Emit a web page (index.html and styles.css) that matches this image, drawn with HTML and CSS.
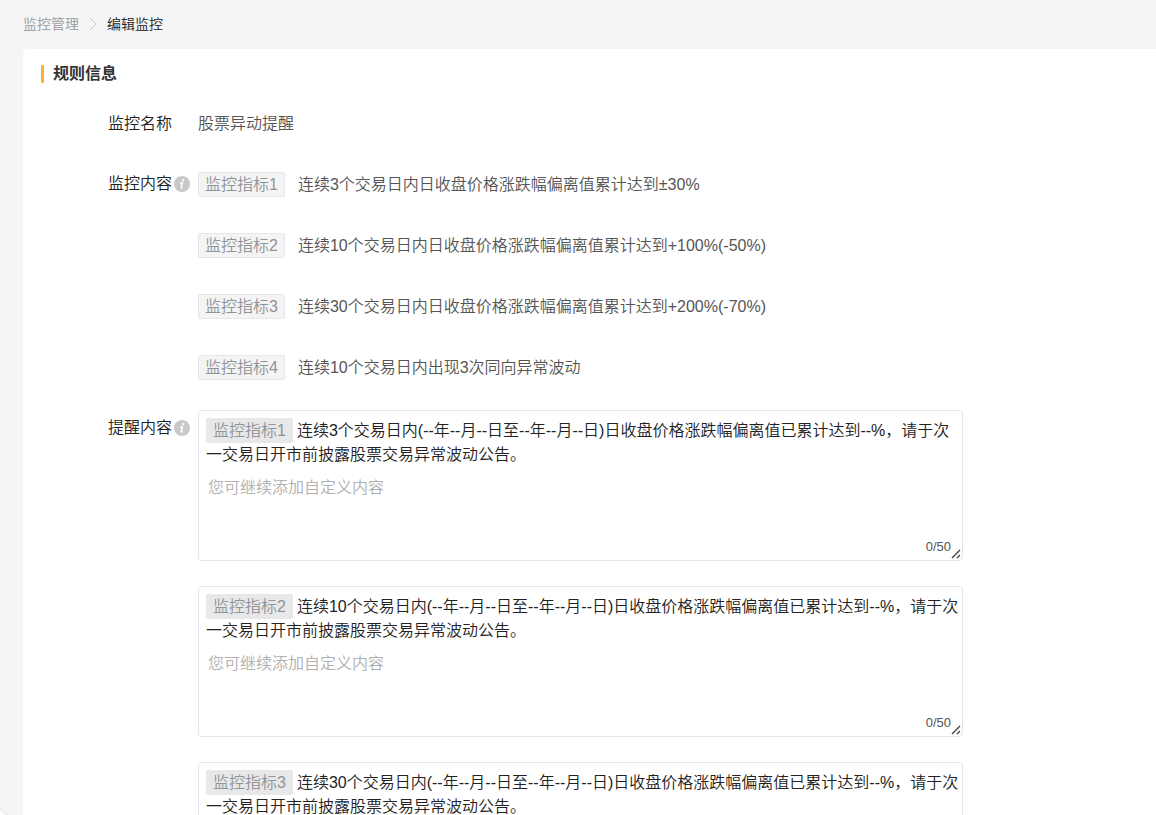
FILE: index.html
```html
<!DOCTYPE html>
<html lang="zh-CN">
<head>
  <meta charset="UTF-8" />
  <meta name="viewport" content="width=device-width, initial-scale=1.0"/>
  <title>编辑监控</title>
  <link rel="stylesheet" href="styles.css">
</head>
<body>
  <div class="page">
    <nav class="breadcrumb">
      <a href="#">监控管理</a>
      <svg width="8" height="14" viewBox="0 0 8 14"><path d="M1 1l6 6-6 6"/></svg>
      <span>编辑监控</span>
    </nav>

    <main class="card">
      <h1 class="card-title">规则信息</h1>

      <div class="form">
        <div class="form-row">
          <div class="form-label">监控名称</div>
          <div class="form-text">股票异动提醒</div>
        </div>

        <div class="form-row">
          <div class="form-label">监控内容
            <svg class="info" width="16" height="16" viewBox="0 0 16 16"><circle cx="8" cy="8" r="8"/><circle class="mark" cx="9.2" cy="4.1" r="1.2"/><path class="stroke" d="M6.3 6.9h2l-1.1 4.5q-.1 1 1.6.2"/></svg>
          </div>
          <ul class="metrics">
            <li><span class="tag">监控指标1</span>连续3个交易日内日收盘价格涨跌幅偏离值累计达到±30%</li>
            <li><span class="tag">监控指标2</span>连续10个交易日内日收盘价格涨跌幅偏离值累计达到+100%(-50%)</li>
            <li><span class="tag">监控指标3</span>连续30个交易日内日收盘价格涨跌幅偏离值累计达到+200%(-70%)</li>
            <li><span class="tag">监控指标4</span>连续10个交易日内出现3次同向异常波动</li>
          </ul>
        </div>

        <div class="form-row">
          <div class="form-label">提醒内容
            <svg class="info" width="16" height="16" viewBox="0 0 16 16"><circle cx="8" cy="8" r="8"/><circle class="mark" cx="9.2" cy="4.1" r="1.2"/><path class="stroke" d="M6.3 6.9h2l-1.1 4.5q-.1 1 1.6.2"/></svg>
          </div>
          <div class="reminders">
            <div class="reminder">
              <label for="remind1"><span class="label-tag">监控指标1</span>连续3个交易日内(--年--月--日至--年--月--日)日收盘价格涨跌幅偏离值已累计达到--%，请于次一交易日开市前披露股票交易异常波动公告。</label>
              <textarea id="remind1" maxlength="50" placeholder="您可继续添加自定义内容"></textarea>
              <span class="count">0/50</span>
              <svg class="grip" width="10" height="10" viewBox="0 0 10 10"><path d="M1 9l8-8M6 9l3-3"/></svg>
            </div>
            <div class="reminder">
              <label for="remind2"><span class="label-tag">监控指标2</span>连续10个交易日内(--年--月--日至--年--月--日)日收盘价格涨跌幅偏离值已累计达到--%，请于次一交易日开市前披露股票交易异常波动公告。</label>
              <textarea id="remind2" maxlength="50" placeholder="您可继续添加自定义内容"></textarea>
              <span class="count">0/50</span>
              <svg class="grip" width="10" height="10" viewBox="0 0 10 10"><path d="M1 9l8-8M6 9l3-3"/></svg>
            </div>
            <div class="reminder">
              <label for="remind3"><span class="label-tag">监控指标3</span>连续30个交易日内(--年--月--日至--年--月--日)日收盘价格涨跌幅偏离值已累计达到--%，请于次一交易日开市前披露股票交易异常波动公告。</label>
              <textarea id="remind3" maxlength="50" placeholder="您可继续添加自定义内容"></textarea>
              <span class="count">0/50</span>
              <svg class="grip" width="10" height="10" viewBox="0 0 10 10"><path d="M1 9l8-8M6 9l3-3"/></svg>
            </div>
          </div>
        </div>
      </div>
    </main>
  </div>

  <script>
    document.querySelectorAll(".reminder").forEach((box) => {
      const input = box.querySelector("textarea");
      const count = box.querySelector(".count");
      input.addEventListener("input", () => {
        count.innerText = input.value.length + "/50";
      });
    });
  </script>
</body>
</html>
```

FILE: styles.css
```css
* {
  margin: 0;
  padding: 0;
  box-sizing: border-box;
}

body {
  background: #fff;
  font-family: "Liberation Sans", "Noto Sans CJK SC", sans-serif;
  font-size: 16px;
  font-weight: 350;
  line-height: 24px;
  color: #222;
}

.page {
  height: 100vh;
  overflow-y: auto;
  scrollbar-width: none;
  padding-left: 23px;
  background: #f5f5f5;
  border-bottom-left-radius: 12px;
  box-shadow: 0 0 3px rgba(0, 0, 0, 0.3);
}

.breadcrumb {
  display: flex;
  align-items: center;
  gap: 10px;
  height: 49px;
  padding-bottom: 2px;
  font-size: 14px;
}

.breadcrumb a {
  color: #999;
  text-decoration: none;
}

.breadcrumb svg {
  fill: none;
  stroke: #c4c4c4;
}

.card {
  padding: 13px 18px 24px;
  background: #fff;
  border-top-left-radius: 4px;
}

.card-title {
  display: flex;
  align-items: center;
  gap: 9px;
  font-size: 16px;
  font-weight: bold;
  color: #333;
}

.card-title::before {
  content: "";
  width: 3px;
  height: 18px;
  border-radius: 1px;
  background: #ffac38;
}

.form {
  display: flex;
  flex-direction: column;
  gap: 36px;
  padding: 26px 0 0 67px;
}

.form-row {
  display: grid;
  grid-template-columns: 90px minmax(0, 1fr);
}

.form-label {
  display: flex;
  align-items: center;
  gap: 2px;
  height: 24px;
}

.form-text,
.metrics {
  color: #555;
}

.info {
  fill: #c8c8c8;
}

.info .mark {
  fill: #fff;
}

.info .stroke {
  fill: none;
  stroke: #fff;
  stroke-width: 1.6;
}

.metrics {
  display: flex;
  flex-direction: column;
  gap: 36px;
  list-style: none;
}

.metrics li {
  display: flex;
  align-items: center;
  gap: 13px;
}

.tag {
  height: 25px;
  padding: 0 6px;
  border: 1px solid #e6e6e6;
  border-radius: 2px;
  background: #f4f4f4;
  color: #909399;
}

.reminders {
  display: flex;
  flex-direction: column;
  gap: 25px;
  max-width: 765px;
  margin-top: -6px;
}

.reminder {
  display: flex;
  flex-direction: column;
  position: relative;
  height: 151px;
  padding: 8px 2px 7px 7px;
  border: 1px solid #e4e4ee;
  border-radius: 4px;
}

.label-tag {
  margin-right: 4px;
  padding: 4px 7px;
  border-radius: 2px;
  background: #e8e8e8;
  color: #909399;
}

.reminder textarea {
  flex: 1;
  padding: 9px 2px;
  border: none;
  outline: none;
  resize: none;
  background: none;
  font: inherit;
  color: #222;
}

.reminder textarea::placeholder {
  color: #b0b0b0;
}

.count {
  position: absolute;
  right: 11px;
  bottom: 1px;
  font-size: 13px;
  color: #555;
}

.grip {
  position: absolute;
  right: 1px;
  bottom: 1px;
  fill: none;
  stroke: #444;
  stroke-width: 1.4;
}
```
